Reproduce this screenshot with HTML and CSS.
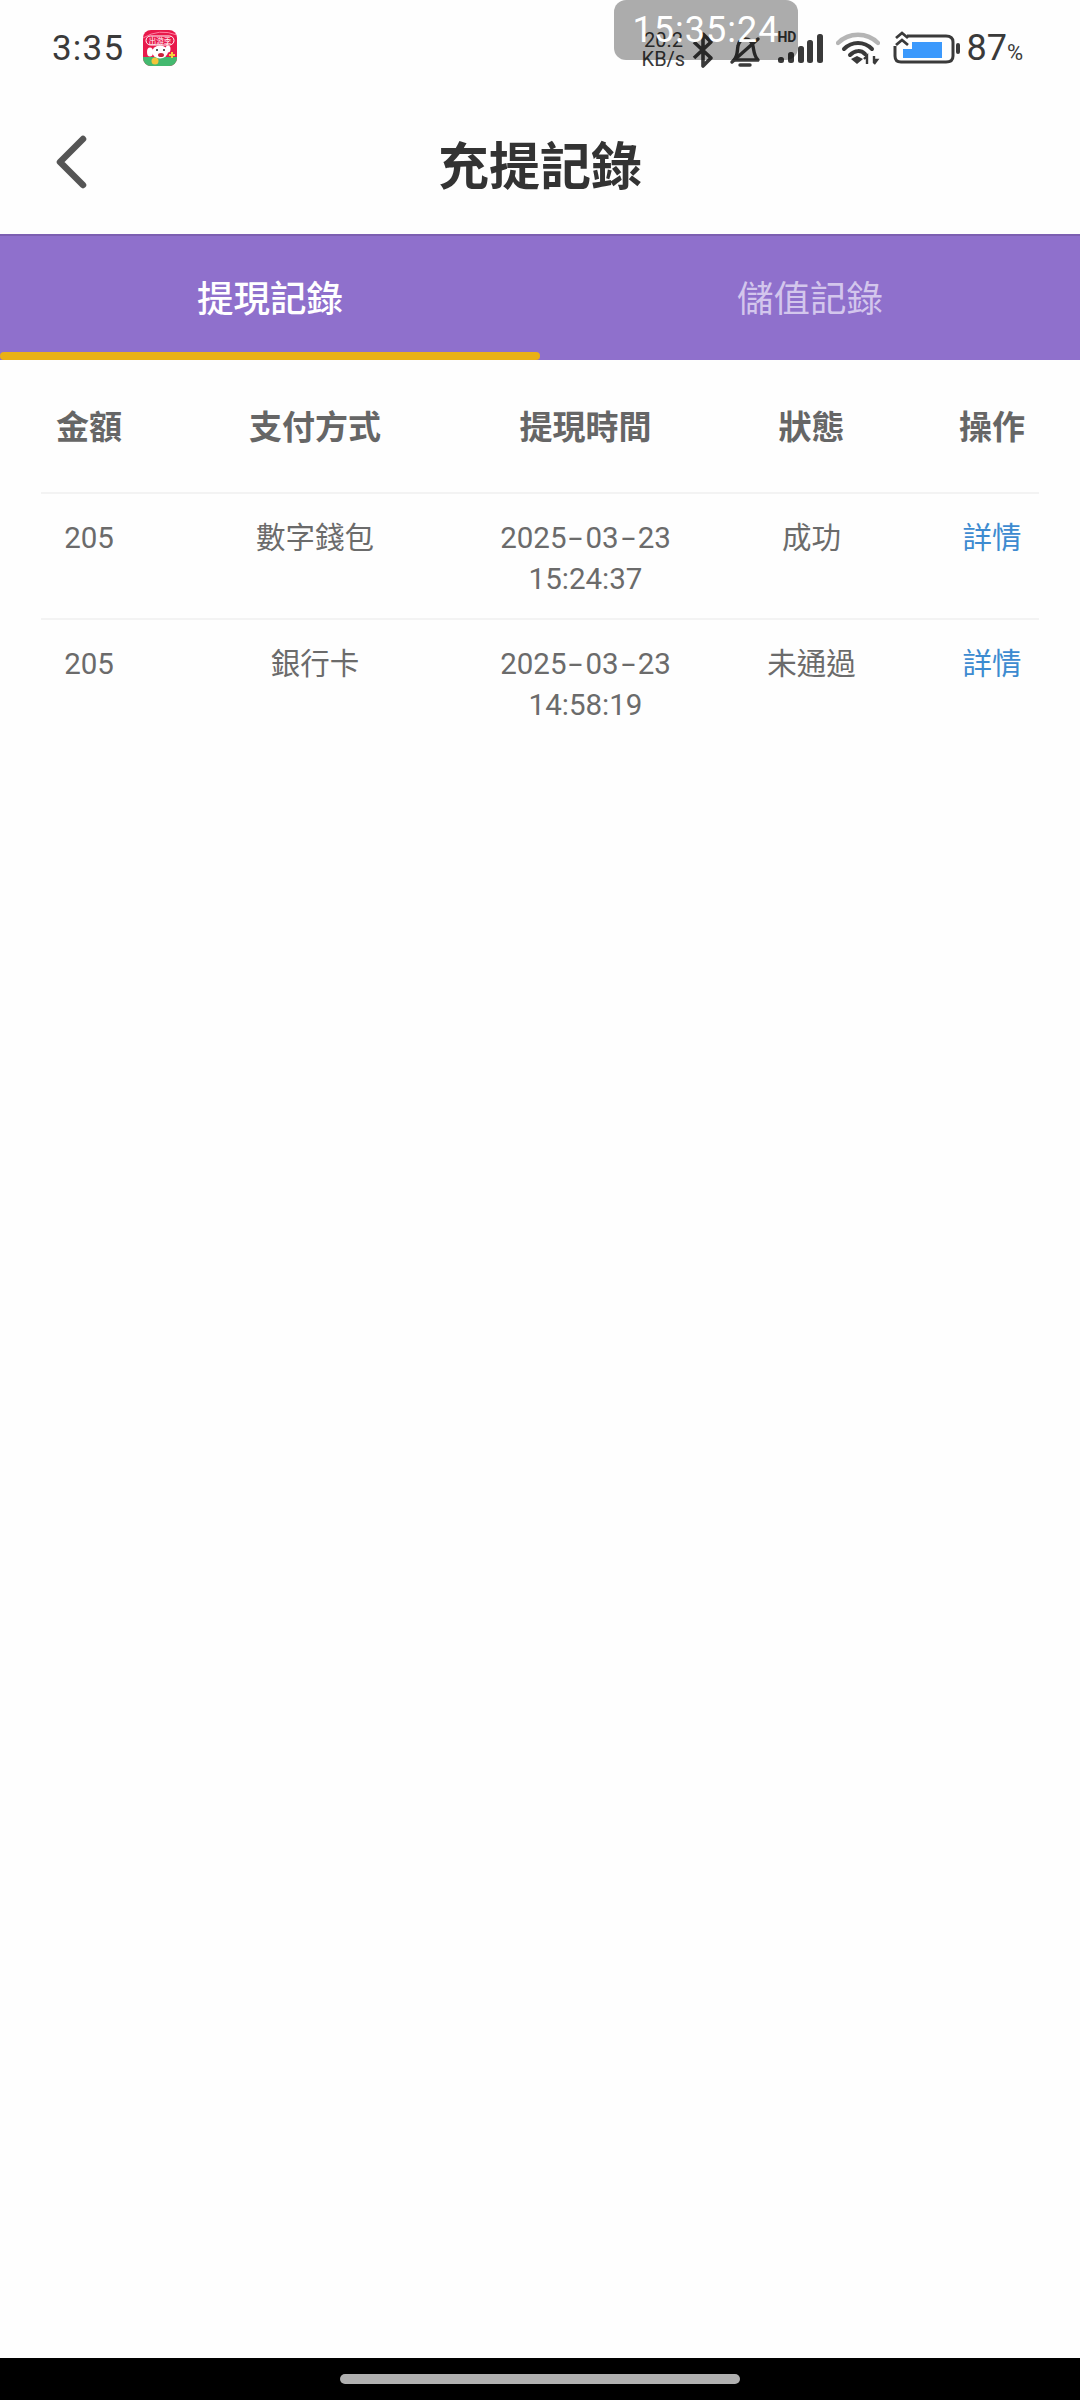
FILE: index.html
```html
<!DOCTYPE html>
<html lang="zh-Hant">
<head>
  <meta charset="UTF-8" />
  <meta name="viewport" content="width=device-width, initial-scale=1.0"/>
  <title>充提記錄</title>
  <link rel="stylesheet" href="styles.css">
</head>
<body>
  <div class="page">
    <div class="status-bar">
      <span class="status-time">3:35</span>
      <svg class="app-icon" width="36" height="36" viewBox="0 0 34 36">
        <defs>
          <clipPath id="iconClip"><rect width="34" height="36" rx="8"/></clipPath>
        </defs>
        <g clip-path="url(#iconClip)">
          <rect width="34" height="36" fill="#e8194b"/>
          <rect y="27" width="34" height="9" fill="#43b96f"/>
          <path d="M0 8 Q16 -2 34 5" fill="none" stroke="#ff7fa0" stroke-width="1"/>
          <rect x="3" y="6" width="28" height="9" rx="4.5" fill="none" stroke="#fff" stroke-width="1"/>
          <text x="17" y="13.5" class="app-icon-label" text-anchor="middle">出游季</text>
          <ellipse cx="17" cy="22" rx="8" ry="6.5" fill="#fff"/>
          <ellipse cx="7" cy="22" rx="3" ry="4.5" fill="#fff"/>
          <ellipse cx="25" cy="19" rx="2.5" ry="3.5" fill="#fff"/>
          <ellipse cx="18" cy="25" rx="3" ry="2" fill="#c8243c"/>
          <circle cx="14" cy="20" r="1" fill="#222"/>
          <circle cx="21" cy="20" r="1" fill="#222"/>
          <path d="M26 24h2v-2h2v2h2v2h-2v2h-2v-2h-2z" fill="#f5d33c"/>
          <circle cx="12" cy="31" r="3.5" fill="#f3c53a"/>
        </g>
      </svg>
      <div class="status-right">
        <div class="net-speed">20.2<br>KB/s</div>
        <svg class="ic-bt" width="22" height="38" viewBox="0 0 22 38">
          <path d="M2 11 L19 27 L11 35 V3 L19 11 L2 27" fill="none" stroke="#3a3a3a" stroke-width="3.6" stroke-linejoin="round"/>
        </svg>
        <svg class="ic-bell" width="32" height="35" viewBox="0 0 32 35">
          <path d="M5 27 C9 23 8 17 9 13 C10 8 13 6 16 6 C20 6 23 8 24 13 C25 18 25 23 29 27 Z" fill="none" stroke="#3a3a3a" stroke-width="3.4" stroke-linejoin="round"/>
          <path d="M11 32 H21" stroke="#3a3a3a" stroke-width="3.4" stroke-linecap="round"/>
          <path d="M3 29 L29 6" stroke="#3a3a3a" stroke-width="3.4" stroke-linecap="round"/>
        </svg>
        <div class="signal">
          <span class="signal-hd">HD</span>
          <svg width="46" height="30" viewBox="0 0 46 30">
            <rect x="1" y="23" width="6" height="6" rx="2.5" fill="#3a3a3a"/>
            <rect x="11" y="18" width="6" height="11" rx="2.5" fill="#3a3a3a"/>
            <rect x="21" y="12" width="6" height="17" rx="2.5" fill="#3a3a3a"/>
            <rect x="30" y="6" width="6" height="23" rx="2.5" fill="#3a3a3a"/>
            <rect x="40" y="0" width="6" height="29" rx="2.5" fill="#3a3a3a"/>
          </svg>
        </div>
        <svg class="ic-wifi" width="44" height="33" viewBox="0 0 44 33">
          <path d="M2 11 C13 0 31 0 42 11" fill="none" stroke="#b5b5b5" stroke-width="4.4" stroke-linecap="round"/>
          <path d="M8 17 C16 9 28 9 36 17" fill="none" stroke="#3a3a3a" stroke-width="4" stroke-linecap="round"/>
          <path d="M14 23 C19 18 25 18 29 22" fill="none" stroke="#3a3a3a" stroke-width="4" stroke-linecap="round"/>
          <path d="M15 27 L21 24 L27 27 L21 32 Z" fill="#3a3a3a"/>
          <path d="M31 32 V25 M28 27 L31 24 L31 27 M38 24 V31 M38 32 L41 28 L38 28" fill="none" stroke="#3a3a3a" stroke-width="2.4"/>
        </svg>
        <svg class="ic-battery" width="67" height="36" viewBox="0 0 67 36">
          <path d="M14 7 H53 Q60 7 60 13 V27 Q60 33 53 33 H8 Q2 33 2 27 V17" fill="none" stroke="#3a3a3a" stroke-width="3"/>
          <rect x="63" y="14" width="4" height="11" rx="2" fill="#3a3a3a"/>
          <path d="M19 13 H49 V29 H10 V20 L19 20 Z" fill="#3b99fc"/>
          <path d="M3 9 L9 4 L15 9 M3 16 L9 11 L15 16" fill="none" stroke="#3a3a3a" stroke-width="2.8"/>
        </svg>
        <div class="battery-level">87<span class="battery-pct">%</span></div>
      </div>
      <div class="clock-pill">15:35:24</div>
    </div>

    <header class="nav">
      <a class="back" href="#">
        <svg width="32" height="54" viewBox="0 0 32 54">
          <path d="M28 4 L5 27 L28 50" fill="none" stroke="#555" stroke-width="6.5" stroke-linecap="round" stroke-linejoin="round"/>
        </svg>
      </a>
      <h1>充提記錄</h1>
    </header>

    <div class="tabs">
      <div class="tab active">提現記錄</div>
      <div class="tab">儲值記錄</div>
    </div>

    <main class="content">
      <table class="records">
        <colgroup>
          <col class="col-amount"><col class="col-method"><col class="col-time"><col class="col-status"><col class="col-action">
        </colgroup>
        <thead>
          <tr>
            <th>金額</th>
            <th>支付方式</th>
            <th>提現時間</th>
            <th>狀態</th>
            <th>操作</th>
          </tr>
        </thead>
        <tbody>
          <tr>
            <td>205</td>
            <td>數字錢包</td>
            <td>2025<span class="dash">-</span>03<span class="dash">-</span>23<br>15:24:37</td>
            <td>成功</td>
            <td><a class="detail" href="#">詳情</a></td>
          </tr>
          <tr>
            <td>205</td>
            <td>銀行卡</td>
            <td>2025<span class="dash">-</span>03<span class="dash">-</span>23<br>14:58:19</td>
            <td>未通過</td>
            <td><a class="detail" href="#">詳情</a></td>
          </tr>
        </tbody>
      </table>
    </main>

    <div class="home-bar"><span class="home-pill"></span></div>
  </div>
</body>
</html>
```

FILE: styles.css
```css
* {
  box-sizing: border-box;
}

body {
  margin: 0;
  background: #fefefe;
  font-family: Roboto, "Noto Sans CJK TC", sans-serif;
  color: #3a3a3a;
}

.page {
  display: flex;
  flex-direction: column;
  height: 2400px;
  overflow: hidden;
}

/* status bar */
.status-bar {
  position: relative;
  display: flex;
  align-items: center;
  height: 96px;
  padding: 0 57px 0 52px;
  flex-shrink: 0;
}

.status-time {
  font-size: 35px;
  letter-spacing: 1.2px;
  color: #3a3a3a;
}

.app-icon {
  margin-left: 18px;
}

.app-icon-label {
  font-size: 7.5px;
  fill: #fff;
}

.status-right {
  display: flex;
  align-items: center;
  margin-left: auto;
}

.net-speed {
  width: 44px;
  font-size: 20px;
  line-height: 19px;
  text-align: center;
  margin: 4px -4px 0 4px;
}

.ic-bt {
  margin-left: 11px;
  margin-top: 4px;
}

.ic-bell {
  margin-left: 15px;
  margin-top: 4px;
}

.signal {
  position: relative;
  margin-left: 16px;
  margin-top: 2px;
  display: flex;
}

.signal-hd {
  position: absolute;
  left: 0;
  top: -4px;
  font-size: 14px;
  line-height: 14px;
  font-weight: 700;
}

.ic-wifi {
  margin-left: 13px;
  margin-top: 1px;
}

.ic-battery {
  margin-left: 13px;
  margin-top: -2px;
}

.battery-level {
  margin-left: 6px;
  font-size: 36px;
  color: #3a3a3a;
}

.battery-pct {
  font-size: 22px;
}

.clock-pill {
  position: absolute;
  left: 614px;
  top: 0;
  width: 184px;
  height: 60px;
  border-radius: 12px;
  background: rgba(0, 0, 0, 0.32);
  color: #fff;
  font-size: 36px;
  letter-spacing: 1px;
  line-height: 60px;
  text-align: center;
}

/* title bar */
.nav {
  position: relative;
  display: flex;
  align-items: center;
  justify-content: center;
  height: 138px;
  padding-bottom: 5px;
  flex-shrink: 0;
}

.back {
  position: absolute;
  left: 55px;
  top: 39px;
  display: flex;
}

.nav h1 {
  margin: 0;
  font-size: 51px;
  font-weight: 700;
  color: #333;
}

/* tabs */
.tabs {
  display: flex;
  height: 126px;
  background: #8f70cc;
  border-top: 2px solid #7c5fb1;
  flex-shrink: 0;
}

.tab {
  position: relative;
  flex: 1;
  display: flex;
  align-items: center;
  justify-content: center;
  padding-bottom: 4px;
  font-size: 36.5px;
  color: #d3c6ec;
}

.tab.active {
  color: #fff;
  font-weight: 500;
}

.tab.active::after {
  content: "";
  position: absolute;
  left: 0;
  right: 0;
  bottom: 0;
  height: 8px;
  border-radius: 4px;
  background: #e9b116;
}

/* table */
.content {
  flex: 1;
  padding: 0 41px;
}

.records {
  width: 100%;
  table-layout: fixed;
  border-collapse: collapse;
  color: #6b6b6b;
}

.col-amount { width: 96px; }
.col-method { width: 356px; }
.col-time { width: 185px; }
.col-status { width: 267px; }
.col-action { width: 94px; }

.records th {
  height: 133px;
  padding: 0 0 2px;
  font-size: 33px;
  font-weight: 700;
  color: #666;
  text-align: center;
}

.records td {
  height: 125px;
  padding: 24px 0 18px;
  border-top: 2px solid #f3f3f3;
  font-size: 29.5px;
  line-height: 41px;
  text-align: center;
  vertical-align: top;
  white-space: nowrap;
}

.dash {
  display: inline-block;
  width: 19px;
  transform: scaleX(1.7);
}

.detail {
  color: #3d8bd0;
  text-decoration: none;
}

/* gesture bar */
.home-bar {
  display: flex;
  align-items: center;
  justify-content: center;
  height: 42px;
  background: #000;
  flex-shrink: 0;
}

.home-pill {
  width: 400px;
  height: 10px;
  border-radius: 5px;
  background: #b0b0b0;
}
```
